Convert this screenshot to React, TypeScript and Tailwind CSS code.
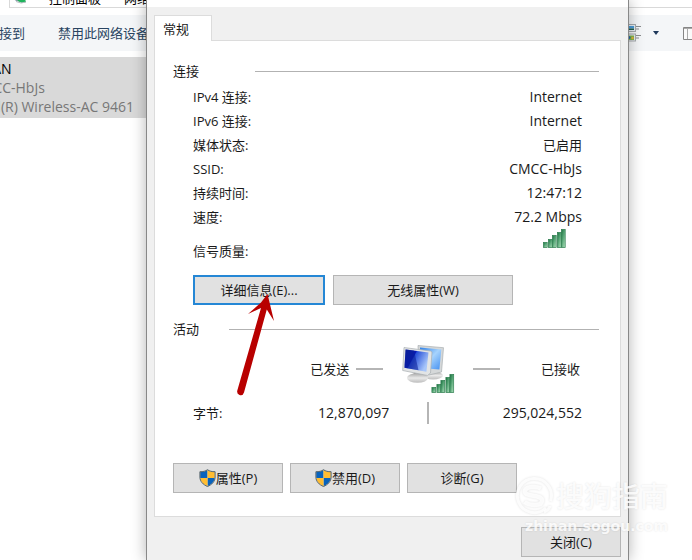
import React from "react";
import clsx from "clsx";

type Row = { label: string; value: string; latin?: boolean };

const CONNECTION_ROWS: Row[] = [
	{ label: "IPv4 连接:", value: "Internet", latin: true },
	{ label: "IPv6 连接:", value: "Internet", latin: true },
	{ label: "媒体状态:", value: "已启用" },
	{ label: "SSID:", value: "CMCC-HbJs", latin: true },
	{ label: "持续时间:", value: "12:47:12", latin: true },
	{ label: "速度:", value: "72.2 Mbps", latin: true },
];

const BARS = [
	{ x: 0, h: 6 },
	{ x: 5, h: 9 },
	{ x: 9, h: 13 },
	{ x: 14, h: 16 },
	{ x: 18, h: 19 },
];

const SignalBars = ({ id, className }: { id: string; className?: string }) => (
	<svg viewBox="0 0 23 19" className={className} aria-hidden="true">
		<defs>
			<linearGradient id={id} x1="0" y1="0" x2="1" y2="1">
				<stop offset="0" stopColor="#1c7040" />
				<stop offset="0.4" stopColor="#4d9f6e" />
				<stop offset="1" stopColor="#b5e6c1" />
			</linearGradient>
		</defs>
		{BARS.map((b) => (
			<rect key={b.x} x={b.x + 0.4} y={19 - b.h + 0.4} width="3.8" height={b.h - 0.8} fill={`url(#${id})`} stroke="#2f7e50" strokeWidth="0.7" />
		))}
	</svg>
);

const Shield = () => (
	<svg viewBox="0 0 17 18" className="h-[18px] w-[17px] shrink-0" aria-hidden="true">
		<defs>
			<clipPath id="shield">
				<path d="M8.5 1C6.5 2.4 4 3 1.2 2.9V8c0 4.400 3 7.400 7.300 9.200 4.300-1.800 7.300-4.800 7.300-9.200V2.900C13 3 10.500 2.400 8.500 1Z" />
			</clipPath>
		</defs>
		<g clipPath="url(#shield)">
			<path d="M0 0h8.500v9H0zM8.500 9H17v9H8.500z" fill="#0863bd" />
			<path d="M8.500 0H17v9H8.500zM0 9h8.500v9H0z" fill="#ffbd32" />
		</g>
		<path d="M8.500 0.700C6.500 2.200 4 2.800 0.900 2.700V8c0 4.500 3.200 7.700 7.600 9.500 4.400-1.800 7.600-5 7.600-9.500V2.700C13 2.800 10.500 2.200 8.500 0.700Z" fill="none" stroke="#54646c" strokeWidth="1" />
	</svg>
);

const Computers = () => (
	<svg viewBox="0 0 52 48" className="h-12 w-[52px]" aria-hidden="true">
		<defs>
			<linearGradient id="frontScreen" x1="0" y1="0" x2="1" y2="0.5">
				<stop offset="0" stopColor="#0a1f9c" />
				<stop offset="0.42" stopColor="#0519b8" />
				<stop offset="0.46" stopColor="#2750d8" />
				<stop offset="1" stopColor="#a8c6fa" />
			</linearGradient>
			<linearGradient id="backScreen" x1="0" y1="0" x2="1" y2="1">
				<stop offset="0" stopColor="#2c7fe8" />
				<stop offset="0.5" stopColor="#a6d3fd" />
				<stop offset="1" stopColor="#438ff0" />
			</linearGradient>
			<linearGradient id="stand" x1="0" y1="0" x2="0" y2="1">
				<stop offset="0" stopColor="#a8a8a8" />
				<stop offset="0.5" stopColor="#e9e9e9" />
				<stop offset="1" stopColor="#bcbcbc" />
			</linearGradient>
		</defs>
		<ellipse cx="31" cy="30.500" rx="10" ry="4" fill="url(#stand)" />
		<path d="M16 0.500 41.500 2.700 39.500 27 27 30 17 27Z" fill="#d5d8d9" stroke="#a9afb1" strokeWidth="0.7" />
		<path d="M18 2.400 39.300 4.500 37.400 24.500 19 23Z" fill="url(#backScreen)" />
		<path d="M12 26h9l1 7H11Z" fill="#a7a7a7" />
		<ellipse cx="15.500" cy="33" rx="10.500" ry="4.800" fill="url(#stand)" />
		<path d="M2 2.500 28.500 6 30 7 28.500 28 25.500 30.500 0.700 25.500Z" fill="#e2e4e5" stroke="#a9afb1" strokeWidth="0.7" />
		<path d="M3.600 4.500 26.500 7.600 24.400 26.800 2.500 22.700Z" fill="url(#frontScreen)" />
		<path d="M3.600 4.500 12 5.600 16.500 25.300 2.500 22.700Z" fill="#0b1f96" fillOpacity="0.55" />
	</svg>
);

const DialogButton = ({ children, focused, className }: { children: React.ReactNode; focused?: boolean; className?: string }) => (
	<button
		type="button"
		className={clsx(
			"flex h-[30px] items-center justify-center bg-[#e1e1e1] text-[#1a1a1a]",
			focused ? "border-2 border-[#2587d5]" : "border border-[#b5b5b5]",
			className
		)}
	>
		{children}
	</button>
);

const GroupTitle = ({ children, className }: { children: React.ReactNode; className?: string }) => (
	<div className="flex h-5 items-center">
		<h2 className={clsx("shrink-0", className)}>{children}</h2>
		<span className="h-px flex-1 bg-[#b2b2b2]" />
	</div>
);

const Explorer = () => (
	<div className="h-full bg-white">
		{/* Address bar */}
		<div className="ml-[9px] flex h-2 items-end overflow-hidden border-b border-l border-[#d9d9d9] text-black">
			<svg viewBox="0 0 16 8" className="ml-[3px] h-2 w-4 shrink-0" aria-hidden="true">
				<path d="M1 0h7v3L3 2Z" fill="#8b9da8" />
				<path d="M4 0h8l1 3-4 1-4-2Z" fill="#1fb45c" />
				<path d="M3 2.500 8 4l5-1" fill="none" stroke="#b3bcc0" strokeWidth="1" />
			</svg>
			<span className="ml-2 w-3 shrink-0 pb-1 leading-4">›</span>
			<span className="shrink-0 pb-px leading-4">控制面板</span>
			<span className="ml-2 w-[15px] shrink-0 pb-1 leading-4">›</span>
			<span className="shrink-0 pb-px leading-4">网络和 Internet</span>
		</div>

		{/* Toolbar */}
		<div className="mt-[7px] flex h-9 items-center overflow-hidden bg-[#f4f6f8] text-[#294461]">
			<button type="button" className="-ml-[14px] shrink-0">连接到</button>
			<button type="button" className="ml-[33px] shrink-0">禁用此网络设备</button>
			<div className="ml-auto flex shrink-0 items-center">
				<button type="button" aria-label="更改视图" className="flex items-center gap-2">
					<svg viewBox="0 0 18 18" className="h-[18px] w-[18px]" aria-hidden="true">
						<rect x="0.500" y="0.500" width="11" height="7" fill="#e8eff4" stroke="#a6aaad" />
						<path d="M2 2h8v2.500H2z" fill="#4b9bd8" />
						<path d="M2 4.500h8V6H2z" fill="#23604b" />
						<rect x="0.500" y="10" width="11" height="7" fill="#e8eff4" stroke="#a6aaad" />
						<path d="M2 11.500h8V16H2z" fill="#82b64d" />
						<circle cx="5" cy="13.500" r="1.500" fill="#2666a9" />
						<circle cx="8.500" cy="14" r="1.200" fill="#e2b43c" />
						<path d="M12 2.500h5M12 5h3M12 11.500h5M12 14h3" stroke="#8b8e90" />
					</svg>
					<svg viewBox="0 0 6 4" className="ml-[3px] h-1 w-1.5" aria-hidden="true">
						<path d="M0 0h6L3 4Z" fill="#1e395b" />
					</svg>
				</button>
				<button type="button" aria-label="预览窗格" className="ml-6 w-[9px] overflow-hidden">
					<svg viewBox="0 0 16 13" className="h-[13px] w-4 max-w-none" aria-hidden="true">
						<path d="M0.500 0.500h15v12H0.500z" fill="#fafafa" stroke="#858585" />
						<path d="M4.500 1v11" stroke="#aaa" />
						<path d="M1 1.500h14" stroke="#aaa" />
					</svg>
				</button>
			</div>
		</div>

		{/* Selected adapter */}
		<div className="mt-1.5 h-[61px] w-[160px] overflow-hidden bg-[#d9d9d9] text-sm leading-[19px] text-[#777]">
			<div className="-ml-7 pt-0.5 whitespace-nowrap">
				<p className="text-black">WLAN</p>
				<p>CMCC-HbJs</p>
				<p>Intel(R) Wireless-AC 9461</p>
			</div>
		</div>
	</div>
);

const StatusDialog = () => (
	<div className="absolute top-0 right-[63px] left-[146px] flex min-h-full flex-col border-x border-[#888] bg-[#f0f0f0] shadow-[0_0_14px_rgba(0,0,0,0.3)]">
		<div className="h-[7px] bg-white" />
		<div className="px-[7px] pt-2">
			<div role="tablist" className="flex">
				<button type="button" role="tab" aria-selected="true" className="relative z-10 h-[26px] w-[58px] border border-b-0 border-[#dcdcdc] bg-white pr-3.5">
					常规
				</button>
			</div>

			<div role="tabpanel" className="-mt-px border border-[#dcdcdc] bg-white pt-5 pr-[21px] pb-[23px] pl-[18px]">
				<GroupTitle className="w-[82px]">连接</GroupTitle>
				<dl className="mt-1 pr-[17px] pl-5">
					{CONNECTION_ROWS.map((row) => (
						<div key={row.label} className="flex h-6 items-center justify-between">
							<dt>{row.label}</dt>
							<dd className={clsx(row.latin && "text-sm")}>{row.value}</dd>
						</div>
					))}
					<div className="flex h-[46px] justify-between">
						<dt className="leading-[44px]">信号质量:</dt>
						<dd>
							<SignalBars id="quality" className="mr-4 h-[19px] w-[23px]" />
						</dd>
					</div>
				</dl>
				<div className="relative flex gap-2 pl-5">
					<DialogButton focused className="w-[132px]">详细信息(E)...</DialogButton>
					<DialogButton className="w-[180px]">无线属性(W)</DialogButton>
					{/* Pointer arrow */}
					<svg viewBox="0 0 40 104" className="pointer-events-none absolute top-[18px] left-[62px] h-[104px] w-10" aria-hidden="true">
						<path d="M32.500 1 39 28 31.800 16.500 9 99.500Q8 103 4.500 102 1.500 101 2.300 97.500L26 15 13 21 26 9.500Z" fill="#b80000" />
					</svg>
				</div>

				<div className="mt-3.5">
					<GroupTitle className="w-14">活动</GroupTitle>
				</div>
				<div className="grid grid-cols-[5fr_62px_3fr] items-center pr-[17px] pl-5">
					<div className="flex h-[60px] items-center justify-end pr-3.5">
						<span>已发送</span>
						<span className="ml-[7px] h-0.5 w-[27px] bg-[#b5b5b5]" />
					</div>
					<div className="relative flex justify-center">
						<Computers />
						<SignalBars id="activity" className="absolute right-1 bottom-0 h-[19px] w-6" />
					</div>
					<div className="flex h-[60px] items-center justify-between pr-0.5 pl-3.5">
						<span className="h-0.5 w-[27px] bg-[#b5b5b5]" />
						<span>已接收</span>
					</div>
					<div className="flex h-7 items-center justify-between pr-2">
						<span>字节:</span>
						<span className="text-sm">12,870,097</span>
					</div>
					<div className="flex justify-center">
						<span className="h-[22px] w-0.5 bg-[#b5b5b5]" />
					</div>
					<div className="text-right text-sm">295,024,552</div>
				</div>

				<div className="mt-9 flex gap-[7px]">
					<DialogButton className="w-[110px]"><Shield />属性(P)</DialogButton>
					<DialogButton className="w-[110px]"><Shield />禁用(D)</DialogButton>
					<DialogButton className="w-[110px]">诊断(G)</DialogButton>
				</div>
			</div>

			<div className="mt-2.5 flex justify-end">
				<DialogButton className="w-[100px]">关闭(C)</DialogButton>
			</div>
		</div>
	</div>
);

const Watermark = () => (
	<div className="pointer-events-none absolute right-6 bottom-6 flex flex-col text-white/85 [text-shadow:0_0_2px_rgba(0,0,0,0.12)]">
		<div className="flex items-center gap-[3px]">
			<svg viewBox="0 0 38 38" className="h-[38px] w-[38px] drop-shadow-[0_0_1px_rgba(0,0,0,0.14)]" fill="none" stroke="currentColor" aria-hidden="true">
				<path d="M31 31A17 17 0 1 1 35.500 24" strokeWidth="3" />
				<path d="M26 11.500C22 9.500 10 8.500 10 14.500S27 17 27 23.500 14 28.500 9.500 25" strokeWidth="4.500" />
				<path d="M29 35q5-2 6-6" strokeWidth="3" />
			</svg>
			<span className="text-[28px] leading-10 font-medium">搜狗指南</span>
		</div>
		<span className="self-end font-['DejaVu_Sans'] text-sm leading-5 font-bold">zhinan.sogou.com</span>
	</div>
);

const App = () => (
	<div className="relative h-screen overflow-hidden bg-white font-['Open_Sans','Noto_Sans_CJK_SC',sans-serif] text-[13px] leading-5 text-[#1a1a1a]">
		<Explorer />
		<StatusDialog />
		<Watermark />
	</div>
);

export default App;
